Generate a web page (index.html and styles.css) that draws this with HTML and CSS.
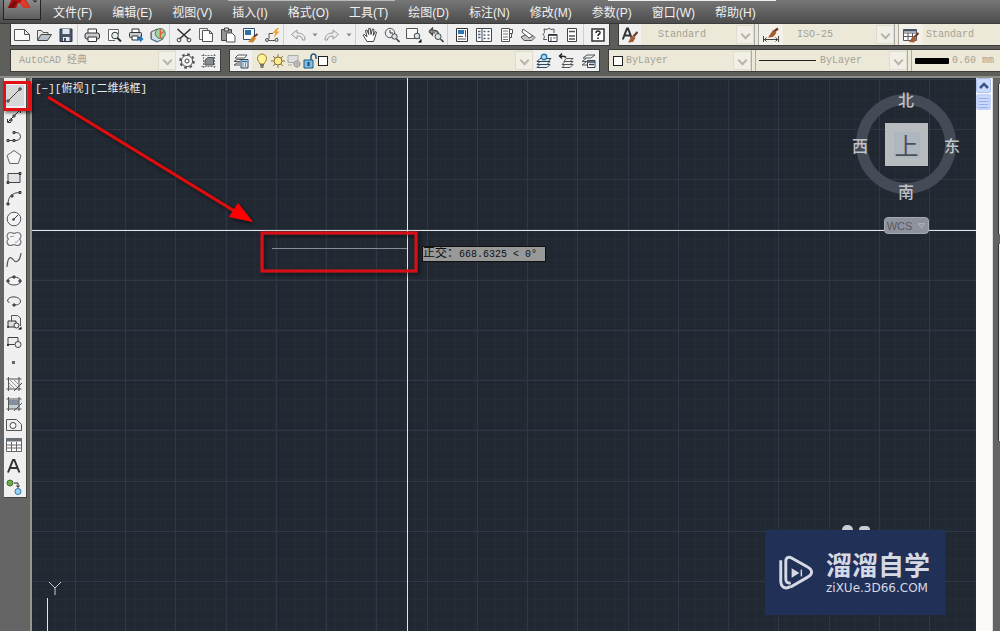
FILE: index.html
```html
<!DOCTYPE html>
<html lang="zh-CN">
<head>
<meta charset="utf-8">
<title>AutoCAD 经典</title>
<link rel="stylesheet" href="styles.css">
</head>
<body>
<svg class="defs" width="0" height="0" aria-hidden="true">
  <defs>
    <symbol id="new" viewBox="0 0 16 16"><path d="M.500 2.500h10l5 5v6H.500zM10.500 2.500v5h5" fill="#fafafa" stroke="#555"/></symbol>
    <symbol id="open" viewBox="0 0 16 16"><path d="M1.500 13V3.500h4l1.500 2h5v2" fill="#e8e8e8" stroke="#555"/><path d="M1.500 13.500l3.500-6h10.500l-4 6z" fill="#b9c0c8" stroke="#444"/></symbol>
    <symbol id="save" viewBox="0 0 16 16"><path d="M2 2h12v12.500H2z" fill="#49566a" stroke="#2c3646"/><path d="M4.500 2h7v5h-7z" fill="#dfe6ee"/><path d="M5 10h6.500v4H5z" fill="#e6e9ed"/><path d="M6 11h2v3H6z" fill="#49566a"/></symbol>
    <symbol id="print" viewBox="0 0 16 16"><path d="M4 6V2h8.500v4" fill="#fff" stroke="#333"/><rect x="1" y="6" width="14.500" height="6" rx="2" fill="#c8ccd0" stroke="#333"/><path d="M4 10h8.500v4.500H4z" fill="#fff" stroke="#333"/></symbol>
    <symbol id="preview" viewBox="0 0 16 16"><path d="M9 13.500H2.500v-11h10V7" fill="#fff" stroke="#666"/><circle cx="9" cy="8.500" r="3.300" fill="#e7eef2" stroke="#333"/><path d="M11.500 11l3.500 3.500" stroke="#333" stroke-width="2"/></symbol>
    <symbol id="publish" viewBox="0 0 16 16"><path d="M4 6V2h7v4" fill="#fff" stroke="#333"/><rect x="1.500" y="5.500" width="12" height="5" rx="1" fill="#c8ccd0" stroke="#333"/><path d="M4 9h6v4H4z" fill="#fff" stroke="#333"/><path d="M9 10.500h3V8.500l3.500 3.500-3.500 3.500v-2H9z" fill="#2675bd"/></symbol>
    <symbol id="globe" viewBox="0 0 16 16"><path d="M1 5l6-3 6 3v7l-6 3-6-3z" fill="#d8dde1" stroke="#555"/><circle cx="10.300" cy="6.500" r="5" fill="#a5d19c" stroke="#4d7f58"/><path d="M10.300 2v9M10.300 7l4-2.500" stroke="#e0573c" stroke-width="1.300"/><path d="M1.500 5.500v6.500l5.500 2.500" stroke="#3e83b8" fill="none"/></symbol>
    <symbol id="cut" viewBox="0 0 16 16"><path d="M1.500 2l11 10M14.500 2L3.500 12" stroke="#333" stroke-width="1.600"/><circle cx="3" cy="13" r="1.900" fill="none" stroke="#444"/><circle cx="13" cy="13" r="1.900" fill="none" stroke="#444"/></symbol>
    <symbol id="copy" viewBox="0 0 16 16"><path d="M4 12.500H1.500V1.500h8v2" fill="#f6f6f6" stroke="#666"/><path d="M4.500 3.500h7l3 3v8h-10zM11.500 3.500v3h3" fill="#fff" stroke="#555"/></symbol>
    <symbol id="paste" viewBox="0 0 16 16"><path d="M1.500 2.500h10v11h-10z" fill="#909498" stroke="#444"/><path d="M4.500 1h4v3h-4z" fill="#ddd" stroke="#444"/><path d="M6.500 6h5.500l3 3v6H6.500z" fill="#fff" stroke="#555"/></symbol>
    <symbol id="match" viewBox="0 0 16 16"><path d="M1.500 1.500h11v11h-11z" fill="#fff" stroke="#2c4f79"/><path d="M3 3h6v5H3z" fill="#2f6faa"/><path d="M15.500 7l-4 3" stroke="#704322" stroke-width="2"/><path d="M11 9l3 2.500-3 4-5-.500z" fill="#cc8832"/></symbol>
    <symbol id="block" viewBox="0 0 16 16"><path d="M2.500 13.500h11M5 12V6.500h4M13 10.500v2" fill="none" stroke="#555"/><circle cx="3" cy="13" r="1.500" fill="#ddd" stroke="#555"/><circle cx="12.500" cy="13" r="1.500" fill="#ddd" stroke="#555"/><path d="M13 1L8.500 6h3l-2 5 6-6.500h-3l2.500-3.500z" fill="#efa02d"/></symbol>
    <symbol id="undo" viewBox="0 0 16 16"><path d="M1.500 7.500L7 3v3c5 0 8 2 8 7h-2.500c0-3-2-4-5.500-4v3z" fill="#eee" stroke="#999"/></symbol>
    <symbol id="redo" viewBox="0 0 16 16"><path d="M14.500 7.500L9 3v3c-5 0-8 2-8 7h2.500c0-3 2-4 5.500-4v3z" fill="#eee" stroke="#999"/></symbol>
    <symbol id="caret" viewBox="0 0 8 16"><path d="M1.500 6.500h5L4 9.500z" fill="#888"/></symbol>
    <symbol id="pan" viewBox="0 0 16 16"><path d="M5 14.500C4 12 2 10.500 1 8l1.500-.500L5 10 3.500 3.500 5 3l1.700 4.500L6.700 1.500h1.600l.700 6 1.500-5.500 1.500.500-.700 6 2-4 1.200.700-1.500 5.300-1.500 4z" fill="#fff" stroke="#444"/></symbol>
    <symbol id="zoomrt" viewBox="0 0 16 16"><circle cx="6" cy="6" r="4.700" fill="#edf1f3" stroke="#555"/><path d="M6 3v3h3" fill="none" stroke="#333"/><circle cx="10.500" cy="9.500" r="2.700" fill="#d6e2e8" stroke="#444"/><path d="M12.500 12l3 3" stroke="#444" stroke-width="1.700"/></symbol>
    <symbol id="zoomwin" viewBox="0 0 16 16"><path d="M.500 1.500h11v10h-11z" fill="#f8f8f8" stroke="#555"/><circle cx="11" cy="9" r="2.800" fill="#d6e2e8" stroke="#444"/><path d="M13 11l1.500 1.500" stroke="#444"/><path d="M15.500 12v3.500H12z" fill="#000"/></symbol>
    <symbol id="zoomprev" viewBox="0 0 16 16"><path d="M1 4.500L4.500 1v2c4 0 5 1 6 3M1 4.500L4.500 8V6H7" fill="#888" stroke="#444" stroke-width="1.200"/><circle cx="10" cy="9.500" r="3" fill="#d6e2e8" stroke="#444"/><path d="M12.500 12l3 3" stroke="#444" stroke-width="1.700"/></symbol>
    <symbol id="props" viewBox="0 0 16 16"><path d="M2.500 1.500h11v13h-11z" fill="#fff" stroke="#333"/><path d="M4 3h6v4H4z" fill="#2978b5"/><path d="M11.500 3v7M4 9.500h5M4 12h8" stroke="#555"/></symbol>
    <symbol id="center" viewBox="0 0 16 16"><path d="M.500 1.500h15v13H.500zM6 2v12" fill="#fff" stroke="#444"/><path d="M2 4.500h2.500M2 7.500h2.500M2 10.500h2.500M7.500 4.500h2M11.500 4.500h2M7.500 8h2M11.500 8h2M7.500 11.500h2M11.500 11.500h2" stroke="#47617a" stroke-width="1.700"/></symbol>
    <symbol id="palette" viewBox="0 0 16 16"><path d="M3.500 1.500h8v13h-8zM11.500 2.500h3v4h-3M11.500 6.500h2v4h-2" fill="#fff" stroke="#555"/><path d="M5 4h5M5 7h5M5 10h5M5 12.500h5" stroke="#777"/></symbol>
    <symbol id="sheet" viewBox="0 0 16 16"><path d="M1 10l4-2 8 .500 2 2-3 3H4z" fill="#c5c8cb" stroke="#555"/><path d="M3 2l10 7-4 2L2 5z" fill="#fff" stroke="#555"/></symbol>
    <symbol id="markup" viewBox="0 0 16 16"><path d="M5 12.500H1.500l1-3-1.500-2 1.500-2L2 2l3 .500L7 1l2 1.500L12 2v4" fill="none" stroke="#555"/><path d="M6.500 7.500h8.500v7H6.500z" fill="#fff" stroke="#333"/><path d="M7 8.500h8M8 11h2M11 11h2.500M8 13h2" stroke="#456"/></symbol>
    <symbol id="calc" viewBox="0 0 16 16"><path d="M3.500 1.500h9v13h-9z" fill="#fff" stroke="#444"/><path d="M5 4.500h6M5 9h6M5 12h6" stroke="#555" stroke-width="1.600"/></symbol>
    <symbol id="help" viewBox="0 0 16 16"><path d="M2 2h12v12H2z" fill="#fff" stroke="#333" stroke-width="1.500"/><path d="M6 6c0-3 4.500-2.500 4 0-.300 1.200-2 1.200-2 3" fill="none" stroke="#222" stroke-width="1.500"/><path d="M7.200 10.500h1.600V12H7.200z" fill="#222"/></symbol>
    <symbol id="textstyle" viewBox="0 0 16 16"><path d="M.800 12.500L5 1.500h1L10 12M2.500 8.500h6" fill="none" stroke="#333" stroke-width="2"/><path d="M15.500 5L11.500 9.500" stroke="#6a3b24" stroke-width="2.200"/><path d="M10 8.500l3.500 2.500-2.500 4-5 .500z" fill="#a45c34"/></symbol>
    <symbol id="dimstyle" viewBox="0 0 16 16"><path d="M.500 9v6M15.500 9v6M1 12.500h14M3.500 10.500l-2 2 2 2M12.500 10.500l2 2-2 2" fill="none" stroke="#444"/><path d="M15 1.500l-4 3" stroke="#6a3b24" stroke-width="2.200"/><path d="M10 3l3.500 3-3.500 4-5 .500z" fill="#a45c34"/></symbol>
    <symbol id="tablestyle" viewBox="0 0 16 16"><path d="M.500 2.500h13v11H.500zM.500 6h13M5 6v7M9.500 6v7M.500 9.500h13" fill="#fff" stroke="#556"/><path d="M.500 2.500h13v2H.500z" fill="#455062"/><path d="M15.500 6l-4 4" stroke="#6a3b24" stroke-width="2.200"/><path d="M10 9l3.500 2.500-2.500 4-5-.500z" fill="#a45c34"/></symbol>
    <symbol id="gear" viewBox="0 0 16 16"><circle cx="8" cy="8" r="6.800" fill="none" stroke="#555" stroke-width="2" stroke-dasharray="2.700 2.640"/><circle cx="8" cy="8" r="5.600" fill="#f4f4f4" stroke="#555"/><circle cx="8" cy="8" r="2" fill="#fff" stroke="#444"/></symbol>
    <symbol id="wsp" viewBox="0 0 16 16"><path d="M.500 2.500h15M.500 13.500h15M2.500 1v14M13.500 1v14" stroke="#777" stroke-dasharray="2 1"/><path d="M4 7l3-2.500h5.500V12H4z" fill="#848b91" stroke="#555"/></symbol>
    <symbol id="layers" viewBox="0 0 16 16"><path d="M2 5l3-3h9l-2.500 3zM1 8.500l3-2h4M1 12l3-2h3M1 8.500h6M1 12h6" fill="#fff" stroke="#555"/><path d="M8 6.500h7v8.500H8z" fill="#e7eef4" stroke="#345"/><path d="M9 8.500h5M9.500 11h1M12 11h1M9.500 13h1M12 13h1" stroke="#2670a8" stroke-width="1.500"/></symbol>
    <symbol id="bulb" viewBox="0 0 16 16"><path d="M6 11C5.500 9 3.500 8 3.500 5.500a4.500 4.500 0 019 0C12.500 8 10.500 9 10 11z" fill="#fff39a" stroke="#9a7c28"/><path d="M6 12h4M6.500 14h3" stroke="#555" stroke-width="1.500"/></symbol>
    <symbol id="sun" viewBox="0 0 16 16"><path d="M8 1v14M1 8h14M3 3l10 10M13 3L3 13" stroke="#8d7843"/><circle cx="8" cy="8" r="4" fill="#ffeb89" stroke="#85703c"/></symbol>
    <symbol id="vpfreeze" viewBox="0 0 16 16"><path d="M2 2.500h10v7H2zM2 12h4" fill="#ddd" stroke="#aaa"/><circle cx="11" cy="11" r="3" fill="#ccc" stroke="#999"/><path d="M11 7v8M7 11h8" stroke="#aaa"/></symbol>
    <symbol id="lock" viewBox="0 0 16 16"><path d="M9 7V4c0-4 5-4 5 0v2" fill="none" stroke="#255d82" stroke-width="1.500"/><path d="M2 7h9v8H2z" fill="#7fbee6" stroke="#245a7d"/><path d="M6.500 9v4" stroke="#174664" stroke-width="2"/></symbol>
    <symbol id="laycur" viewBox="0 0 16 16"><path d="M1 14.500l3-3h10l-3 3zM1 11.500l3-3h10l-3 3zM1 8.500l3-3h11l-3 3z" fill="#e6f0f4" stroke="#345"/><circle cx="8" cy="4" r="2.700" fill="#b5dcf3" stroke="#2878a8" stroke-width="1.400"/></symbol>
    <symbol id="layprev" viewBox="0 0 16 16"><path d="M4 14.500l3-3h8l-3 3zM4 11.500l3-3h8l-3 3zM6 8.500l2-3h7l-3 3z" fill="#eef2f4" stroke="#555"/><path d="M8 4.500C7 3 5 3 2 3M4 .500L1.500 3 4 5.500" fill="none" stroke="#222" stroke-width="1.400"/></symbol>
    <symbol id="laystate" viewBox="0 0 16 16"><path d="M3 5l4-3h8l-4 3zM2 8.500l4-3M2 12l4-3M2 8.500h6M2 12h5" fill="#eee" stroke="#555"/><path d="M7.500 7.500h7.500v7H7.500z" fill="#fff" stroke="#345"/><path d="M8 9h7M9 11.500h5" stroke="#345" stroke-width="1.500"/></symbol>

    <symbol id="line" viewBox="0 0 16 16"><path d="M2 14L14 2" stroke="#444"/><path d="M1 13h2v2H1zM13 1h2v2h-2z" fill="#ccc" stroke="#333"/></symbol>
    <symbol id="xline" viewBox="0 0 16 16"><path d="M2 14L14 2M1.500 11v3.500H5M11 1.500h3.500V5" fill="none" stroke="#333"/><path d="M7 7h2v2H7zM4 11h2v2H4z" fill="#bbb" stroke="#333"/></symbol>
    <symbol id="pline" viewBox="0 0 16 16"><path d="M2 12.500h6M8 4.500h2c6 0 6 8 0 8H8" fill="none" stroke="#444"/><path d="M1 11.500h2v2H1zM7 11.500h2v2H7zM7 3.500h2v2H7z" fill="#bbb" stroke="#333"/></symbol>
    <symbol id="polygon" viewBox="0 0 16 16"><path d="M8 1.500l7 5-2.700 8H3.700L1 6.500z" fill="#f4f4f4" stroke="#666"/></symbol>
    <symbol id="rect" viewBox="0 0 16 16"><path d="M2 3.500h12v9H2z" fill="#e1e3e4" stroke="#444"/><path d="M1 11.500h2v2H1zM13 2.500h2v2h-2z" fill="#999" stroke="#333"/></symbol>
    <symbol id="arc" viewBox="0 0 16 16"><path d="M2 14C2 7 6 2.500 14 2.500" fill="none" stroke="#444"/><path d="M1 13h2v2H1zM5 5h2v2H5zM13 1.500h2v2h-2z" fill="#999" stroke="#333"/></symbol>
    <symbol id="circle" viewBox="0 0 16 16"><circle cx="8" cy="8" r="6.800" fill="#f3f4f5" stroke="#555"/><path d="M8 8l4-4" stroke="#333"/><circle cx="7.500" cy="8.500" r="1.300" fill="#444"/></symbol>
    <symbol id="cloud" viewBox="0 0 16 16"><path d="M2.500 8C0 6 1 1.500 4.500 1.500c2 0 2.500 1 3.500 1 1 0 1.500-1 3.500-1C15 1.500 16 6 13.500 8c2.500 2 1.500 6.500-2 6.500-2 0-2.500-1-3.500-1-1 0-1.500 1-3.500 1C1 14.500 0 10 2.500 8z" fill="#f3f4f5" stroke="#777" stroke-width="1.200"/><path d="M4 6c1.500-1 2.500 0 4-1M9 11c1 1 3 0 3-2" fill="none" stroke="#999"/></symbol>
    <symbol id="spline" viewBox="0 0 16 16"><path d="M1 15C2 1 6 6 8 8.500s6 1 7-7.500" fill="none" stroke="#555" stroke-width="1.200"/></symbol>
    <symbol id="ellipse" viewBox="0 0 16 16"><ellipse cx="8" cy="8" rx="6.500" ry="4" fill="#f3f4f5" stroke="#444"/><path d="M7 3h2v2H7zM1 7h2v2H1zM13 7h2v2h-2z" fill="#888" stroke="#333"/></symbol>
    <symbol id="earc" viewBox="0 0 16 16"><path d="M1.500 8C2 2 14 3 14.500 8c0 3-3 4-6 4M1.500 8l2 2" fill="none" stroke="#444"/><path d="M7 11h2v2H7z" fill="#888" stroke="#333"/></symbol>
    <symbol id="insert" viewBox="0 0 16 16"><path d="M5.500 7V1.500h6l3 2.500v8" fill="#eee" stroke="#555"/><path d="M2 7h8v6H2z" fill="#ddd" stroke="#333"/><circle cx="10.500" cy="11.500" r="2.500" fill="#eee" stroke="#333"/><circle cx="2" cy="13" r="1" fill="#333"/><path d="M15.500 12.500v3H12z" fill="#000"/></symbol>
    <symbol id="mkblock" viewBox="0 0 16 16"><path d="M2 3.500h10v7H2z" fill="#eee" stroke="#444"/><circle cx="12" cy="10.500" r="3" fill="#eee" stroke="#444"/><path d="M1 10h2v2H1z" fill="#333"/></symbol>
    <symbol id="point" viewBox="0 0 16 16"><path d="M6 6h3v3H6z" fill="#666"/></symbol>
    <symbol id="hatch" viewBox="0 0 16 16"><path d="M2.500 1v14M13 1v14M.500 3h15M.500 13h15" stroke="#555"/><path d="M3 7l6 6M3 10l3 3M4 4l8 8M8 4l4 4" stroke="#999"/><path d="M8 15l8-8" stroke="#444"/></symbol>
    <symbol id="gradient" viewBox="0 0 16 16"><path d="M3 4h10v8H3z" fill="#83909b"/><path d="M3 9h10v4H3z" fill="#c7cdd1"/><path d="M2.500 1v14M13 1v14M.500 3h15M.500 13h15M8 15l8-8" stroke="#555"/></symbol>
    <symbol id="region" viewBox="0 0 16 16"><path d="M.500 2.500h10l5 5v6H.500z" fill="#eee" stroke="#555"/><circle cx="7" cy="8.500" r="3" fill="#fff" stroke="#444"/></symbol>
    <symbol id="table" viewBox="0 0 16 16"><path d="M.500 1.500h15v13H.500zM.500 8h15M.500 11h15M5.500 5v9M10.500 5v9" fill="#fff" stroke="#666"/><path d="M.500 1.500h15v3H.500z" fill="#68727d"/></symbol>
    <symbol id="mtext" viewBox="0 0 16 16"><path d="M2 14.500L7 2h1.400l5 12.500M4 10h8" fill="none" stroke="#333" stroke-width="2"/></symbol>
    <symbol id="addsel" viewBox="0 0 16 16"><circle cx="4" cy="4" r="3" fill="#6fab4c" stroke="#43702b"/><circle cx="12" cy="12.500" r="3" fill="#9bd4f6" stroke="#2878a8"/><path d="M8 4h4v4M10.500 6.500L12 8.500l1.500-2" fill="none" stroke="#222"/></symbol>
  </defs>
</svg>

<div class="app">
  <header class="menubar">
    <button class="app-button" aria-label="应用程序"><svg viewBox="0 0 38 20"><path d="M4 8L10-6h10l8 14-8-1-3-4c-2-1-3 0-4 5z" fill="#b40d0a"/><path d="M4 8l7-8 3 1-4 7z" fill="#741010"/><path d="M20-4l8 12-8-1-3-4z" fill="#e03a28"/><path d="M30 0h5l-2 2z" fill="#222"/></svg></button>
    <nav class="menu">
      <button>文件(F)</button><button>编辑(E)</button><button>视图(V)</button><button>插入(I)</button><button>格式(O)</button><button>工具(T)</button><button>绘图(D)</button><button>标注(N)</button><button>修改(M)</button><button>参数(P)</button><button>窗口(W)</button><button>帮助(H)</button>
    </nav>
  </header>

  <div class="toolbar-row">
    <div class="group">
      <button class="tool" aria-label="新建"><svg><use href="#new"/></svg></button>
      <button class="tool" aria-label="打开"><svg><use href="#open"/></svg></button>
      <button class="tool" aria-label="保存"><svg><use href="#save"/></svg></button>
      <span class="sep"></span>
      <button class="tool" aria-label="打印"><svg><use href="#print"/></svg></button>
      <button class="tool" aria-label="打印预览"><svg><use href="#preview"/></svg></button>
      <button class="tool" aria-label="发布"><svg><use href="#publish"/></svg></button>
      <button class="tool" aria-label="三维"><svg><use href="#globe"/></svg></button>
      <span class="sep"></span>
      <button class="tool" aria-label="剪切"><svg><use href="#cut"/></svg></button>
      <button class="tool" aria-label="复制"><svg><use href="#copy"/></svg></button>
      <button class="tool" aria-label="粘贴"><svg><use href="#paste"/></svg></button>
      <button class="tool" aria-label="特性匹配"><svg><use href="#match"/></svg></button>
      <button class="tool" aria-label="块编辑器"><svg><use href="#block"/></svg></button>
      <span class="sep"></span>
      <button class="tool" aria-label="放弃"><svg><use href="#undo"/></svg></button>
      <button class="tool narrow" aria-label="放弃列表"><svg><use href="#caret"/></svg></button>
      <button class="tool" aria-label="重做"><svg><use href="#redo"/></svg></button>
      <button class="tool narrow" aria-label="重做列表"><svg><use href="#caret"/></svg></button>
      <span class="sep"></span>
      <button class="tool" aria-label="平移"><svg><use href="#pan"/></svg></button>
      <button class="tool" aria-label="实时缩放"><svg><use href="#zoomrt"/></svg></button>
      <button class="tool" aria-label="窗口缩放"><svg><use href="#zoomwin"/></svg></button>
      <button class="tool" aria-label="缩放上一个"><svg><use href="#zoomprev"/></svg></button>
      <span class="sep"></span>
      <button class="tool" aria-label="特性"><svg><use href="#props"/></svg></button>
      <button class="tool" aria-label="设计中心"><svg><use href="#center"/></svg></button>
      <button class="tool" aria-label="工具选项板"><svg><use href="#palette"/></svg></button>
      <button class="tool" aria-label="图纸集"><svg><use href="#sheet"/></svg></button>
      <button class="tool" aria-label="标记集"><svg><use href="#markup"/></svg></button>
      <button class="tool" aria-label="计算器"><svg><use href="#calc"/></svg></button>
      <span class="sep"></span>
      <button class="tool" aria-label="帮助"><svg><use href="#help"/></svg></button>
    </div>
    <div class="group grow">
      <button class="tool" aria-label="文字样式"><svg><use href="#textstyle"/></svg></button>
      <label class="combo w-text"><select aria-label="文字样式" disabled><option>Standard</option></select><span class="arrow"></span></label>
      <span class="divider"></span>
      <button class="tool cream" aria-label="标注样式"><svg><use href="#dimstyle"/></svg></button>
      <label class="combo w-dim"><select aria-label="标注样式" disabled><option>ISO-25</option></select><span class="arrow"></span></label>
      <span class="divider"></span>
      <button class="tool cream" aria-label="表格样式"><svg><use href="#tablestyle"/></svg></button>
      <label class="combo open"><select aria-label="表格样式" disabled><option>Standard</option></select></label>
    </div>
  </div>

  <div class="toolbar-row">
    <div class="group">
      <label class="combo w-space"><select aria-label="工作空间" disabled><option>AutoCAD 经典</option></select><span class="arrow"></span></label>
      <button class="tool" aria-label="工作空间设置"><svg><use href="#gear"/></svg></button>
      <button class="tool" aria-label="我的工作空间"><svg><use href="#wsp"/></svg></button>
    </div>
    <div class="group">
      <button class="tool" aria-label="图层特性"><svg><use href="#layers"/></svg></button>
      <label class="combo w-layer">
        <svg><use href="#bulb"/></svg><svg><use href="#sun"/></svg><svg><use href="#vpfreeze"/></svg><svg><use href="#lock"/></svg><i class="swatch"></i>
        <select aria-label="图层" disabled><option>0</option></select><span class="arrow"></span></label>
      <button class="tool" aria-label="置为当前"><svg><use href="#laycur"/></svg></button>
      <button class="tool" aria-label="上一个图层"><svg><use href="#layprev"/></svg></button>
      <button class="tool" aria-label="图层状态"><svg><use href="#laystate"/></svg></button>
    </div>
    <div class="group grow">
      <label class="combo w-color"><i class="swatch"></i><select aria-label="颜色" disabled><option>ByLayer</option></select><span class="arrow"></span></label>
      <span class="divider"></span>
      <label class="combo w-type"><i class="thin"></i><select aria-label="线型" disabled><option>ByLayer</option></select><span class="arrow"></span></label>
      <span class="divider"></span>
      <label class="combo open"><i class="thick"></i><select aria-label="线宽" disabled><option>0.60 mm</option></select></label>
    </div>
  </div>

  <main class="workspace">
    <aside class="dock">
      <div class="draw-tools">
        <button class="tool active" aria-label="直线"><svg><use href="#line"/></svg></button>
        <button class="tool" aria-label="构造线"><svg><use href="#xline"/></svg></button>
        <button class="tool" aria-label="多段线"><svg><use href="#pline"/></svg></button>
        <button class="tool" aria-label="多边形"><svg><use href="#polygon"/></svg></button>
        <button class="tool" aria-label="矩形"><svg><use href="#rect"/></svg></button>
        <button class="tool" aria-label="圆弧"><svg><use href="#arc"/></svg></button>
        <button class="tool" aria-label="圆"><svg><use href="#circle"/></svg></button>
        <button class="tool" aria-label="修订云线"><svg><use href="#cloud"/></svg></button>
        <button class="tool" aria-label="样条曲线"><svg><use href="#spline"/></svg></button>
        <button class="tool" aria-label="椭圆"><svg><use href="#ellipse"/></svg></button>
        <button class="tool" aria-label="椭圆弧"><svg><use href="#earc"/></svg></button>
        <button class="tool" aria-label="插入块"><svg><use href="#insert"/></svg></button>
        <button class="tool" aria-label="创建块"><svg><use href="#mkblock"/></svg></button>
        <button class="tool" aria-label="点"><svg><use href="#point"/></svg></button>
        <button class="tool" aria-label="图案填充"><svg><use href="#hatch"/></svg></button>
        <button class="tool" aria-label="渐变色"><svg><use href="#gradient"/></svg></button>
        <button class="tool" aria-label="面域"><svg><use href="#region"/></svg></button>
        <button class="tool" aria-label="表格"><svg><use href="#table"/></svg></button>
        <button class="tool" aria-label="多行文字"><svg><use href="#mtext"/></svg></button>
        <button class="tool" aria-label="添加选定对象"><svg><use href="#addsel"/></svg></button>
      </div>
    </aside>

    <section class="canvas">
      <svg class="drawing" aria-hidden="true">
        <defs>
          <pattern id="minor" width="10" height="10" x="3" y="1" patternUnits="userSpaceOnUse"><path d="M0 0h1v10H0zM1 0h9v1H1z" fill="#242c37"/></pattern>
          <pattern id="major" width="201" height="201" x="43" y="51" patternUnits="userSpaceOnUse"><path d="M0 0h1v201H0zM50 0h1v201h-1zM100 0h1v201h-1zM151 0h1v201h-1zM0 0h201v1H0zM0 50h201v1H0zM0 100h201v1H0zM0 151h201v1H0z" fill="#2f3843"/></pattern>
          <filter id="shade" x="-20%" y="-20%" width="140%" height="140%"><feDropShadow dx="2" dy="2" stdDeviation="2" flood-color="#000" flood-opacity=".6"/></filter>
        </defs>
        <rect width="100%" height="100%" fill="url(#minor)"/>
        <rect width="100%" height="100%" fill="url(#major)"/>
        <rect x="0" y="152" width="100%" height="1" fill="#e6e6ea"/>
        <rect x="375" y="0" width="1" height="100%" fill="#e6e6ea"/>
        <rect x="240" y="170" width="135" height="1" fill="#858b94"/>
        <path d="M17 504l6 6 6-6M23 510v7" fill="none" stroke="#c8cbd0"/>
        <rect x="15" y="520" width="1" height="100%" fill="#e6e6ea"/>
        <g filter="url(#shade)"><path d="M16 19L204 134" stroke="#e00a0a" stroke-width="3"/><path d="M221 144L197 139l9-14z" fill="#f00"/></g>
        <path d="M230 155h154v38H230z" fill="none" stroke="#d90f12" stroke-width="3" filter="url(#shade)"/>
      </svg>
      <div class="view-label">[−][俯视][二维线框]</div>
      <div class="ortho-tip"><span>正交：</span>668.6325 &lt; 0°</div>
      <div class="compass">
        <span class="north">北</span><span class="west">西</span><button class="cube">上</button><span class="east">东</span><span class="south">南</span>
      </div>
      <button class="wcs">WCS <svg viewBox="0 0 10 8"><path d="M1.500 1.500h7L5 6z" fill="none" stroke="#b9bcc3"/></svg></button>
      <div class="brand">
        <svg viewBox="0 0 36 36"><path d="M1.800 5v21c0 7 5 9 10 6" fill="none" stroke="#d5d9e4" stroke-width="3"/><path d="M12 28c-4 1-5-1-5-4V6c0-4 3-5 6-3.500l16 9c6 3 6 8 0 11L12 32.500" fill="none" stroke="#d5d9e4" stroke-width="3"/><path d="M13 13v10l8-5z" fill="#d5d9e4"/><path d="M23 14.500v7" stroke="#d5d9e4" stroke-width="1.500"/></svg>
        <div class="brand-text"><strong>溜溜自学</strong><span>ziXUe.3D66.COM</span></div>
      </div>
    </section>

    <div class="scrollbar"><button class="up" aria-label="向上滚动"><svg viewBox="0 0 14 14"><path d="M3 9l4-4 4 4" fill="none" stroke="#3c5485" stroke-width="2.500"/></svg></button><span class="thumb"></span></div>
    <div class="side-panel"><span></span><span></span></div>
    <div class="highlight"></div>
  </main>
</div>
</body>
</html>
```
FILE: styles.css
```css
* { box-sizing: border-box; }
body {
  margin: 0;
  background: #646464;
  font: 12px/16px "Liberation Sans", "Noto Sans CJK SC", sans-serif;
  overflow: hidden;
}
button { border: 0; padding: 0; background: none; color: inherit; font: inherit; }
svg { display: block; flex: none; }
.defs { position: absolute; }
.app { display: flex; flex-direction: column; min-height: 100vh; }

/* Menu bar */
.menubar {
  display: flex;
  height: 24px;
  padding-left: 3px;
  gap: 12px;
  flex: none;
  overflow: hidden;
  color: #f0f0f0;
  background:
    linear-gradient(#b9bcb9, #b9bcb9) 228px 0 / 167px 1px no-repeat,
    linear-gradient(#eee, #eee) 608px 0 / 168px 1px no-repeat,
    linear-gradient(#777, #4c4c4c);
  border-bottom: 1px solid #333;
}
.app-button {
  width: 38px;
  height: 20px;
  overflow: hidden;
  background: linear-gradient(#8c8c8c, #5e5e5e);
  border: 1px solid #222;
  border-top: 0;
}
.app-button svg { width: 36px; height: 20px; }
.menu { display: flex; gap: 20px; padding-top: 5px; white-space: nowrap; }
.menu button { height: 16px; }

/* Toolbars */
.toolbar-row {
  display: flex;
  flex: none;
  gap: 10px;
  height: 26px;
  padding: 0 0 5px 11px;
  background: #5d5e5a;
}
.group { display: flex; flex: none; height: 21px; background: #f0f0f0; box-shadow: 0 0 0 1px #3c3c3c; }
.group.grow { flex: 1; }
.tool { display: grid; place-items: center; flex: none; width: 22px; }
.tool svg { width: 16px; height: 16px; }
.tool.narrow { width: 12px; }
.tool.narrow svg { width: 8px; }
.tool.cream { background: #f3f0e8; width: 24px; }
.sep { width: 4px; flex: none; border-left: 1px solid #d6cdbb; }
.divider { width: 5px; flex: none; background: #ece9d8; border: solid #aaa; border-width: 0 1px; }
.combo {
  display: flex;
  align-items: center;
  min-width: 0;
  flex: none;
  background: #ece9d8;
  color: #a3a196;
}
.combo svg { width: 16px; height: 16px; }
.combo select {
  flex: 1;
  min-width: 0;
  appearance: none;
  border: 0;
  padding: 0;
  background: none;
  color: #a3a196;
  opacity: 1;
  font: 10px/20px "Liberation Mono", "Noto Sans CJK SC", monospace;
}
.arrow {
  display: grid;
  place-items: center;
  flex: none;
  width: 18px;
  height: 19px;
  background: #f2f0e6;
  border: 1px solid #e0ddd0;
}
.arrow::before {
  content: "";
  width: 5px;
  height: 5px;
  border: solid #b8b6aa;
  border-width: 0 2px 2px 0;
  transform: rotate(45deg);
}
.w-text { width: 113px; padding-left: 17px; }
.w-dim { width: 111px; padding-left: 14px; }
.w-space { width: 165px; padding-left: 8px; }
.w-layer { width: 281px; padding-left: 2px; }
.w-color { width: 142px; padding-left: 4px; }
.w-type { width: 151px; padding-left: 3px; }
.open { flex: 1; padding-left: 3px; }
.swatch { flex: none; width: 10px; height: 10px; margin-right: 3px; background: #fff; border: 1px solid #222; }
.thin { width: 57px; height: 1px; margin-right: 4px; background: #222; }
.thick { width: 34px; height: 6px; margin-right: 3px; background: #000; border-radius: 1px; }

/* Workspace */
.workspace { position: relative; display: flex; flex: 1; border-top: 2px solid #8e8e86; }
.dock { flex: none; width: 32px; padding-left: 4px; background: #656565; border-right: 2px solid #98988c; }
.draw-tools {
  display: flex;
  flex-direction: column;
  width: 23px;
  height: 420px;
  padding-top: 7px;
  background: #f0f0f0;
  border: solid #444;
  border-width: 0 1px 1px 0;
}
.draw-tools .tool { flex: 1; min-height: 0; width: 20px; }
.draw-tools .active { background: #d6d7d9; }
.canvas { position: relative; flex: 1; min-width: 0; overflow: hidden; background: #212832; }
.drawing { position: absolute; inset: 0; width: 100%; height: 100%; }
.view-label {
  position: absolute;
  left: 3px;
  top: 3px;
  color: #e8e8e8;
  font: 11px/16px "Liberation Mono", "Noto Sans CJK SC", monospace;
}
.ortho-tip {
  position: absolute;
  left: 390px;
  top: 168px;
  width: 124px;
  height: 16px;
  border: 1px solid #111;
  background: #999;
  color: #111;
  font: 10px/14px "Liberation Mono", "Noto Sans CJK SC", monospace;
  white-space: nowrap;
}
.ortho-tip span { font-size: 12px; }
.compass {
  position: absolute;
  right: 20px;
  top: 16px;
  width: 100px;
  height: 100px;
  border: 11px solid #444a56;
  border-radius: 50%;
  color: #bfc2c6;
  font-size: 16px;
  font-weight: 500;
}
.compass span { position: absolute; }
.north { left: 31px; top: -12px; }
.south { left: 31px; top: 80px; }
.west { left: -15px; top: 34px; }
.east { left: 77px; top: 34px; }
.cube {
  position: absolute;
  left: 18px;
  top: 18px;
  width: 43px;
  height: 43px;
  background: linear-gradient(#aeb6bf, #aeb6bf) center / 26px 26px no-repeat, #b9bcbf;
  color: #4b5058;
  font: 24px/40px "Noto Sans CJK SC", sans-serif;
}
.wcs {
  position: absolute;
  right: 47px;
  top: 139px;
  display: flex;
  align-items: center;
  justify-content: center;
  gap: 5px;
  width: 45px;
  height: 17px;
  border: 1px solid #a5a8b0;
  border-radius: 4px;
  background: #8e929c;
  color: #555a65;
  font-size: 11px;
}
.wcs svg { width: 9px; height: 8px; }
.brand {
  position: absolute;
  right: 31px;
  bottom: 16px;
  display: flex;
  align-items: center;
  gap: 12px;
  width: 180px;
  height: 85px;
  padding-left: 14px;
  background: #213057;
  color: #d5d9e4;
}
.brand::before, .brand::after {
  content: "";
  position: absolute;
  top: -5px;
  left: 77px;
  width: 11px;
  height: 5px;
  border-radius: 6px 6px 0 0;
  background: #c9ccd0;
}
.brand::after { left: 94px; top: -4px; height: 4px; }
.brand > svg { width: 35px; height: 36px; }
.brand-text { display: grid; padding-bottom: 6px; }
.brand strong { font: 700 26px/36px "Noto Sans CJK SC", sans-serif; }
.brand span { font: 12px/12px "DejaVu Sans", sans-serif; }

.scrollbar { flex: none; width: 17px; background: #fbfaf8; border-right: 1px solid #ddd; }
.up, .thumb {
  display: grid;
  place-items: center;
  width: 15px;
  height: 15px;
  border: 1px solid #adc0f0;
  border-radius: 2px;
  background: #ccdafc;
}
.up svg { width: 14px; height: 14px; }
.thumb { margin-top: 1px; height: 16px; background: repeating-linear-gradient(#ccdafc 0 2px, #93aee8 2px 3px); border-width: 2px 3px; border-color: #c4d3fa; }
.side-panel { display: flex; flex-direction: column; flex: none; width: 7px; padding: 6px 0 0 5px; gap: 10px; background: #646464; }
.side-panel span { height: 150px; background: #f4f4f4; border-left: 1px solid #333; }
.side-panel span + span { height: 197px; }
.highlight {
  position: absolute;
  left: 3px;
  top: 3px;
  width: 28px;
  height: 30px;
  border: 3px solid #e01014;
  box-shadow: 2px 2px 3px #0008;
}
```
